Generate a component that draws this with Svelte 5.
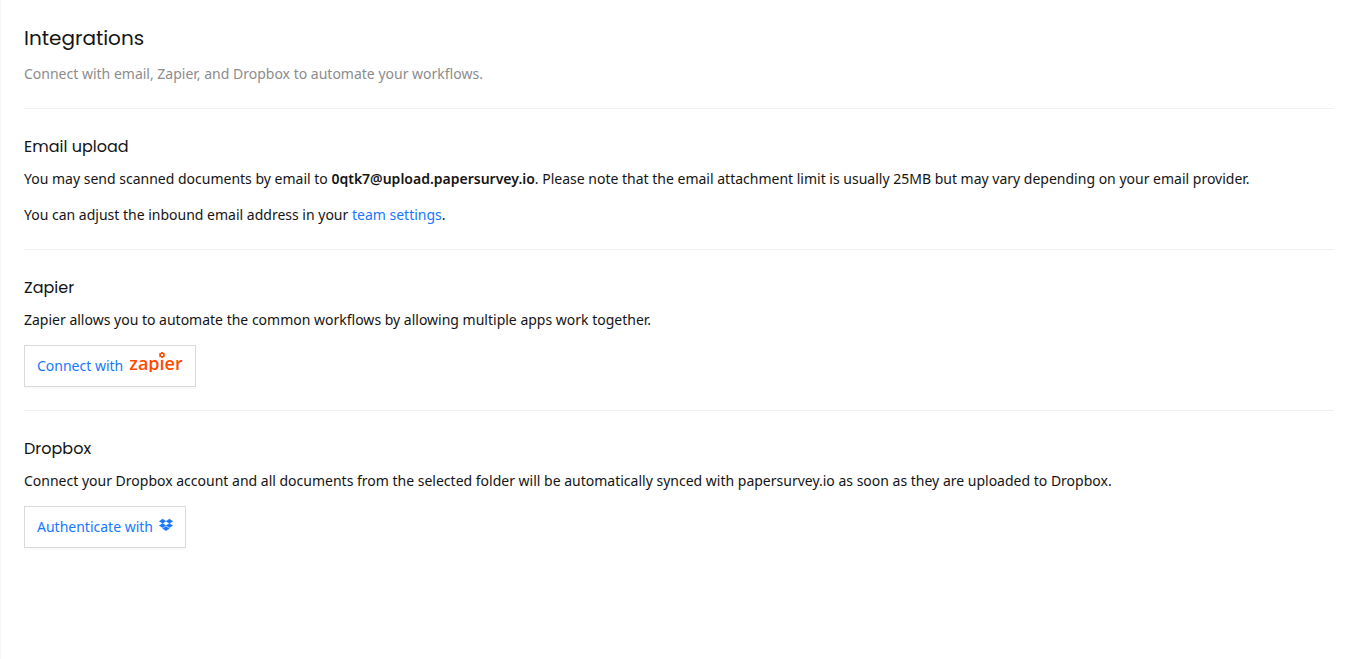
<script>
  let email = '0qtk7@upload.papersurvey.io';

  // Petals of the Zapier mark, in degrees
  let petals = [0, 60, 120, 180, 240, 300];
</script>

<style>
  :global(body) {
    margin: 0;
    background: #fff;
  }

  main {
    min-height: 100vh;
    box-sizing: border-box;
    padding: 24px 24px 24px 23px;
    border-left: 1px solid #f5f5f5;
    color: #141414;
    font-family: "Noto Sans", sans-serif;
    font-size: 14px;
    line-height: 22px;
  }

  h1,
  h2 {
    margin: 0;
    font-family: Poppins, Inter, sans-serif;
    font-weight: 400;
  }

  h1 {
    margin-bottom: 11px;
    font-size: 20px;
    line-height: 28px;
  }

  h2 {
    margin-bottom: 8px;
    font-size: 16px;
    line-height: 26px;
  }

  p {
    margin: 0 0 14px;
  }

  .subtitle {
    margin-bottom: 23px;
    color: #8c8c8c;
  }

  section {
    padding: 25px 0 23px;
    border-top: 1px solid #f0f0f0;
  }

  section p:last-child {
    margin-bottom: 0;
  }

  b {
    font-weight: 600;
  }

  a {
    color: #1677ff;
    text-decoration: none;
  }

  button {
    display: flex;
    align-items: center;
    height: 42px;
    padding: 0 12px;
    border: 1px solid #d9d9d9;
    background: #fff;
    box-shadow: 0 2px 0 rgba(0, 0, 0, 0.02);
    color: #1677ff;
    font-family: inherit;
    font-size: 14px;
    line-height: 22px;
    cursor: pointer;
  }

  .zapier {
    margin-left: 6px;
    padding-bottom: 6px;
    color: #ff4a00;
    font-family: "Open Sans", "Noto Sans", sans-serif;
    font-size: 18px;
    font-weight: 600;
    /* the wordmark has a short descender */
    clip-path: inset(-4px 0 8px 0);
  }

  .letter {
    position: relative;
  }

  .flower {
    position: absolute;
    left: 50%;
    bottom: 16px;
    width: 8px;
    height: 8px;
    margin-left: -4px;
    background: #fff;
  }

  .dropbox {
    width: 14px;
    height: 14px;
    margin: 0 0 4px 6px;
  }
</style>

<main>
  <h1>Integrations</h1>
  <p class="subtitle">Connect with email, Zapier, and Dropbox to automate your workflows.</p>

  <section>
    <h2>Email upload</h2>
    <p>You may send scanned documents by email to <b>{email}</b>. Please note that the email attachment limit is usually 25MB but may vary depending on your email provider.</p>
    <p>You can adjust the inbound email address in your <a href="#team-settings">team settings</a>.</p>
  </section>

  <section>
    <h2>Zapier</h2>
    <p>Zapier allows you to automate the common workflows by allowing multiple apps work together.</p>
    <button type="button">
      Connect with
      <span class="zapier">zap<span class="letter">i<svg class="flower" viewBox="0 0 8 8" aria-hidden="true">
        {#each petals as angle}
          <path d="M4 2.6V1" stroke="#ff4a00" stroke-width="1.8" transform="rotate({angle} 4 4)" />
        {/each}
        <circle cx="4" cy="4" r="1.9" fill="none" stroke="#ff4a00" stroke-width="1.2" />
      </svg></span>er</span>
    </button>
  </section>

  <section>
    <h2>Dropbox</h2>
    <p>Connect your Dropbox account and all documents from the selected folder will be automatically synced with papersurvey.io as soon as they are uploaded to Dropbox.</p>
    <button type="button">
      Authenticate with
      <svg class="dropbox" viewBox="0 0 14 14" aria-hidden="true">
        <path fill="#1677ff" stroke="#1677ff" stroke-width="0.3" d="M3.6 1 7 3.2 3.6 5.4.2 3.2zM10.4 1l3.4 2.2-3.4 2.2L7 3.2zM.2 7.6l3.4-2.200L7 7.600 3.600 9.800zM10.400 5.400l3.400 2.200-3.400 2.200L7 7.600zM3.600 10.600 7 8.400l3.400 2.200L7 12.800z" />
      </svg>
    </button>
  </section>
</main>
